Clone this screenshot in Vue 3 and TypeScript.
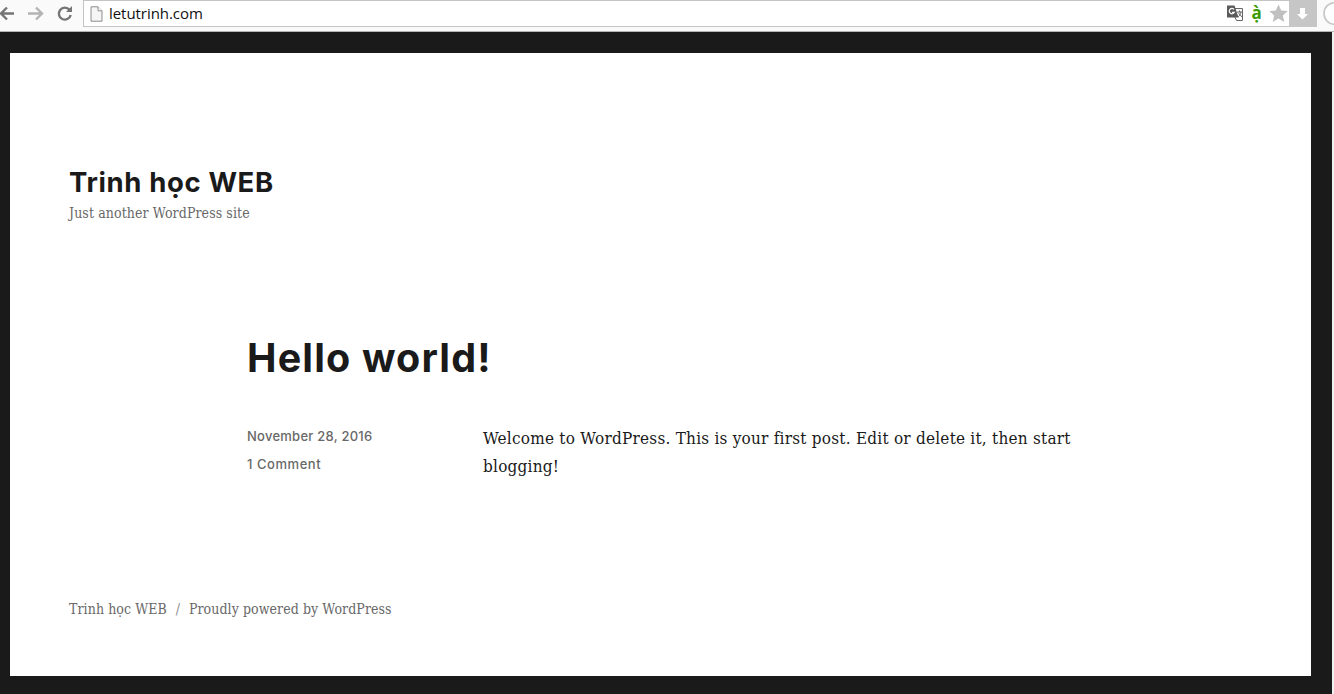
<script setup lang="ts">
const address = 'letutrinh.com'
const siteTitle = 'Trinh học WEB'
const tagline = 'Just another WordPress site'
const post = {
  title: 'Hello world!',
  date: 'November 28, 2016',
  comments: '1 Comment',
  lines: ['Welcome to WordPress. This is your first post. Edit or delete it, then start', 'blogging!'],
}
</script>

<template>
  <div class="window">
    <header class="toolbar">
      <svg class="nav" width="83" height="31" viewBox="0 0 83 31" fill="none" stroke-width="2.4">
        <path d="M14 13.5H1.5M7 7.5l-6 6 6 6" stroke="#757575" />
        <path d="M28 13.5h13.5M36 7.5l6 6-6 6" stroke="#b3b3b3" />
        <path d="M69.500 9.800a6 6 0 1 0 1.200 5.200" stroke="#757575" />
        <path d="M72 6v6h-6z" fill="#757575" />
      </svg>
      <div class="address">
        <svg class="page-icon" width="13" height="16" viewBox="0 0 13 16">
          <path d="M1 .8h7l4 4v10.400H1z" fill="#f5f5f5" stroke="#8c8c8c" />
          <path d="M8 .8v4h4" fill="#fff" stroke="#8c8c8c" />
        </svg>
        <span class="url">{{ address }}</span>
        <svg class="tools" width="64" height="26" viewBox="1225 1 64 26">
          <path d="M1235 8.500h7.500v12h-6l-2-4" fill="#fff" stroke="#666" />
          <path d="M1227 5.500h7.500l4 12H1227z" fill="#5a5a5a" />
          <path d="M1234 9.300a2.700 2.700 0 1 0 .4 3h-2.400" fill="none" stroke="#fff" stroke-width="1.200" />
          <path d="M1237 12h5M1239.500 10.500v1.500M1241 12c-.5 2.500-2 4-3 5M1238.500 13l3.500 4" fill="none" stroke="#666" />
          <text x="1251.500" y="18.500" class="accent">ạ̀</text>
          <path d="M1278.500 4.500l2.700 6 6.600.6-5 4.300 1.500 6.500-5.800-3.400-5.800 3.400 1.500-6.500-5-4.300 6.600-.6z" fill="#c0c0c0" />
        </svg>
      </div>
      <svg class="end" width="45" height="31" viewBox="1289 0 45 31">
        <path d="M1289 0h28v27h-28z" fill="#c6c6c6" />
        <path d="M1300 8h5v6h3l-5.500 5.500-5.500-5.500h3z" fill="#fff" />
        <circle cx="1335" cy="13.500" r="11" fill="#fff" stroke="#c8c8c8" stroke-width="1.700" />
      </svg>
    </header>
    <div class="viewport">
      <div class="site">
        <div class="branding">
          <h1>{{ siteTitle }}</h1>
          <p class="tagline">{{ tagline }}</p>
        </div>
        <article>
          <h2>{{ post.title }}</h2>
          <div class="entry">
            <div class="meta">
              <div><span class="date">{{ post.date }}</span></div>
              <div><span class="comments">{{ post.comments }}</span></div>
            </div>
            <div class="content">
              <div v-for="line in post.lines" :key="line">{{ line }}</div>
            </div>
          </div>
        </article>
        <footer>
          <span class="foot-title">{{ siteTitle }}</span>
          <span class="slash">/</span>
          <span class="powered">Proudly powered by WordPress</span>
        </footer>
      </div>
    </div>
  </div>
</template>

<style>
body { margin: 0; overflow: hidden; }
</style>

<style scoped>
.window { width: 1334px; height: 694px; background: #f1f1f1; overflow: hidden; }
.toolbar { height: 32px; box-sizing: border-box; display: flex; align-items: flex-start; background: #fafafa; border-bottom: 1px solid #b5b5b5; }
.toolbar svg { flex: none; display: block; }
.address { flex: 1; height: 27px; box-sizing: border-box; display: flex; align-items: center; background: #fff; border: 1px solid #c4c4c4; border-right: 0; padding-left: 6px; }
.url { flex: 1; margin-left: 6px; font: 15px/25px "Open Sans", sans-serif; letter-spacing: -0.05px; color: #111; }
.accent { font: bold 17px "Open Sans", sans-serif; fill: #3b9b00; }
.viewport { width: 1332px; height: 662px; box-sizing: border-box; padding: 21px 21px 0 10px; background: #1a1a1a; }
.site { height: 623px; box-sizing: border-box; padding: 112px 59px 0; background: #fff; color: #1a1a1a; font-family: "DejaVu Serif Condensed", "DejaVu Serif", serif; font-stretch: condensed; white-space: nowrap; }
h1, h2, p { margin: 0; }
h1 { font: 700 27.5px/34px Inter, sans-serif; letter-spacing: 0.63px; }
.tagline { font-size: 14px; line-height: 18px; letter-spacing: 0.1px; margin-top: 5px; color: #686868; }
article { margin: 112px 0 0 178px; }
h2 { font: 700 39.5px/48px Inter, sans-serif; letter-spacing: 1.15px; }
.entry { display: flex; margin-top: 42px; }
.meta { width: 236px; margin-top: -2px; font: 500 13px/28px Inter, sans-serif; color: #686868; }
.date { letter-spacing: 0.25px; }
.comments { letter-spacing: 0.55px; }
.content { font-size: 17px; line-height: 28px; letter-spacing: 0.23px; }
footer { display: flex; margin-top: 119px; font-size: 14px; line-height: 20px; letter-spacing: 0.08px; color: #686868; }
.slash { width: 22px; text-align: center; color: #8c8c8c; }
</style>
